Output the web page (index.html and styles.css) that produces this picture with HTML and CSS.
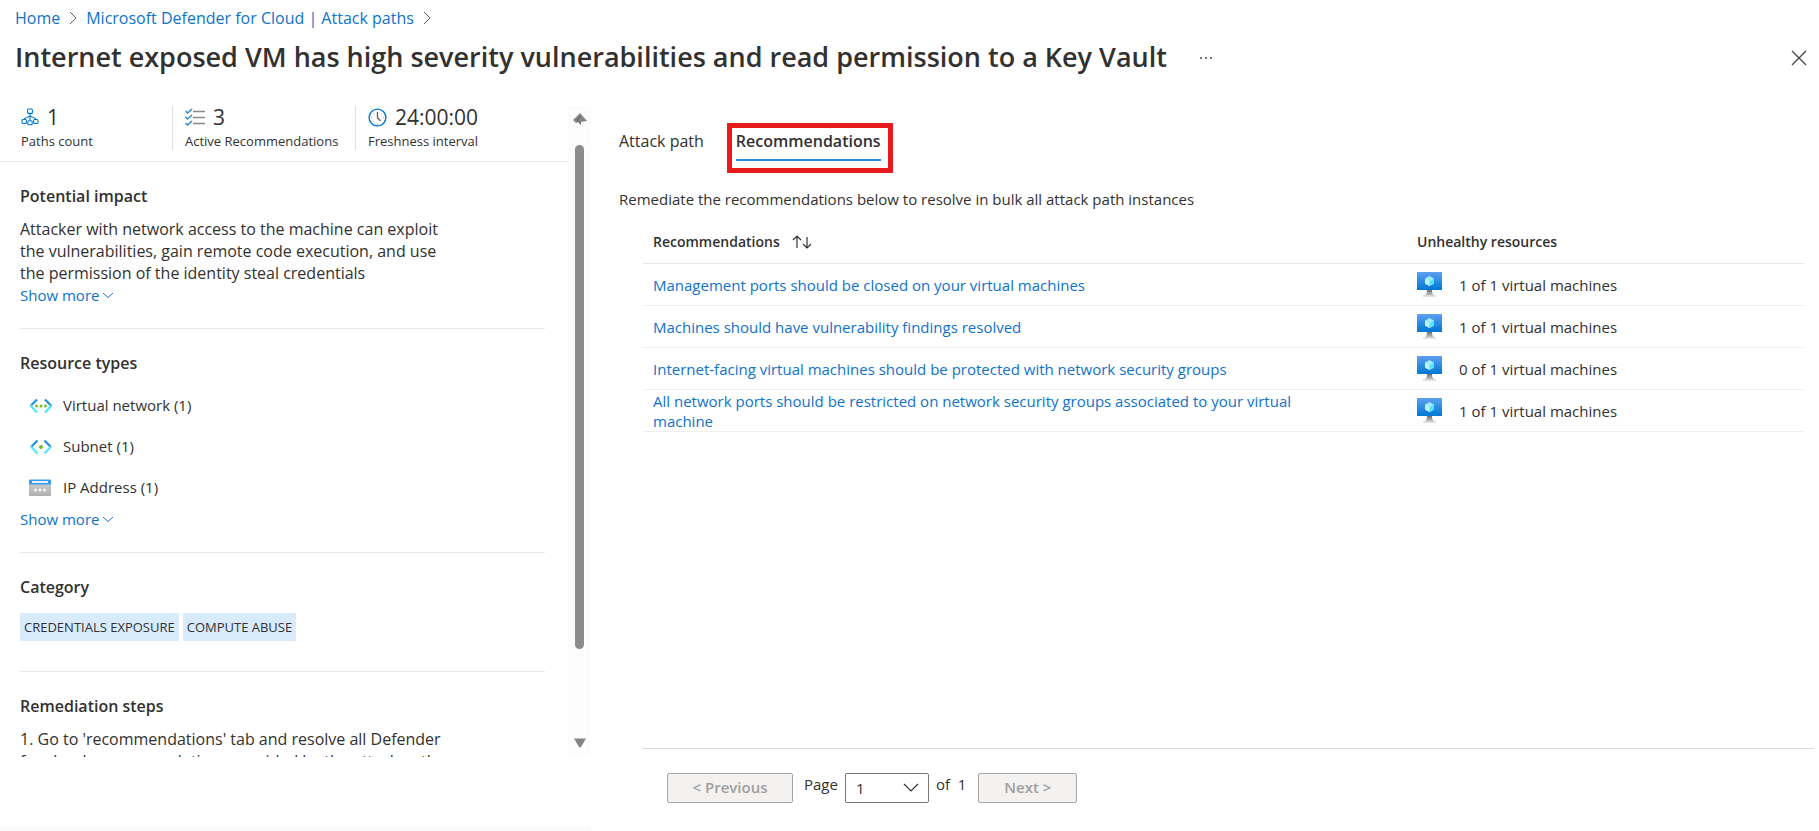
FILE: index.html
```html
<!DOCTYPE html>
<html lang="en">
<head>
<meta charset="utf-8">
<title>Attack path - Microsoft Defender for Cloud</title>
<link rel="stylesheet" href="styles.css">
</head>
<body>
<svg class="defs" width="0" height="0" aria-hidden="true">
  <defs>
    <linearGradient id="screen" x1="0" y1="1" x2="0" y2="0"><stop offset="0" stop-color="#0078d4"/><stop offset="1" stop-color="#5ea0ef"/></linearGradient>
    <linearGradient id="stand" x1="0" y1="0" x2="0" y2="1"><stop offset="0" stop-color="#707070"/><stop offset="1" stop-color="#c8c8c8"/></linearGradient>
    <linearGradient id="grey" x1="0" y1="0" x2="0" y2="1"><stop offset="0" stop-color="#d2d2d2"/><stop offset="1" stop-color="#b0b0b0"/></linearGradient>
    <symbol id="vm" viewBox="0 0 25 25">
      <path d="M10 18h5c0 3 .5 4.500 3 5.500H7c2.500-1 3-2.500 3-5.500z" fill="url(#stand)"/>
      <path d="M6 23.500h13v1H6z" fill="#c8c8c8"/>
      <rect width="25" height="18" rx=".6" fill="url(#screen)"/>
      <path d="M12.500 4l4.500 2.500v5L12.500 14 8 11.500v-5z" fill="#9cebff"/>
      <path d="M12.500 9v5L8 11.500v-5z" fill="#c3f1ff"/>
      <path d="M12.500 9v5l4.500-2.500v-5z" fill="#50e6ff"/>
    </symbol>
    <symbol id="down" viewBox="0 0 12 8"><path d="M1 2l5 4.500L11 2" fill="none" stroke="currentColor"/></symbol>
  </defs>
</svg>
<header class="top">
  <nav class="crumbs" aria-label="Breadcrumb">
    <a href="#">Home</a>
    <svg width="8" height="14" viewBox="0 0 8 14"><path d="M1 1l6 6-6 6" fill="none" stroke="#605e5c"/></svg>
    <a href="#">Microsoft Defender for Cloud | Attack paths</a>
    <svg width="8" height="14" viewBox="0 0 8 14"><path d="M1 1l6 6-6 6" fill="none" stroke="#605e5c"/></svg>
  </nav>
  <div class="title-row">
    <h1>Internet exposed VM has high severity vulnerabilities and read permission to a Key Vault</h1>
    <button class="icon-btn" aria-label="More"><svg width="14" height="4" viewBox="0 0 14 4" fill="#444"><circle cx="2" cy="2" r="1"/><circle cx="7" cy="2" r="1"/><circle cx="12" cy="2" r="1"/></svg></button>
    <button class="icon-btn close" aria-label="Close"><svg width="16" height="16" viewBox="0 0 16 16"><path d="M1 1l14 14M15 1L1 15" stroke="#444" stroke-width="1.300"/></svg></button>
  </div>
</header>
<main class="main">
  <aside class="side">
    <div class="scroller">
      <div class="content">
        <div class="stats">
          <div class="stat paths">
            <div class="value"><svg width="18" height="18" viewBox="0 0 18 18" fill="none" stroke="#0078d4" stroke-width="1.100"><rect x="6.600" y="1" width="4.800" height="4.400" rx="1"/><path d="M9 5.500v7M3.500 11.500v-1L9 8l5.500 2.500v1"/><rect x="1" y="11.500" width="4.400" height="4" rx="1"/><rect x="6.800" y="12.800" width="4.400" height="4" rx="1"/><rect x="12.600" y="11.500" width="4.400" height="4" rx="1"/></svg>1</div>
            <div class="label">Paths count</div>
          </div>
          <div class="stat recs">
            <div class="value"><svg width="20" height="18" viewBox="0 0 20 18" fill="none" stroke-width="1.500"><path d="M8 3.500h12M8 9.500h12M8 15.500h12" stroke="#8a8886"/><path d="M.5 3l2 2L7 1M.5 9l2 2L7 7M.5 15l2 2L7 13" stroke="#2b88d8"/></svg>3</div>
            <div class="label">Active Recommendations</div>
          </div>
          <div class="stat fresh">
            <div class="value"><svg width="19" height="19" viewBox="0 0 19 19" fill="none"><circle cx="9.500" cy="9.500" r="8.400" stroke="#0078d4" stroke-width="1.400"/><path d="M9.500 4v6l3 3" stroke="#605e5c" stroke-width="1.300"/><path d="M9.500 15v1.500M3 9.500h1M15 9.500h1M5 5l.7.700M14 5l-.7.700M5 14l.7-.7" stroke="#8a8886" stroke-width=".7"/></svg>24:00:00</div>
            <div class="label">Freshness interval</div>
          </div>
        </div>
        <section class="block">
          <h2>Potential impact</h2>
          <p>Attacker with network access to the machine can exploit the vulnerabilities, gain remote code execution, and use the permission of the identity steal credentials</p>
          <button class="more">Show more<svg width="12" height="8"><use href="#down"/></svg></button>
        </section>
        <section class="block">
          <h2>Resource types</h2>
          <ul class="types">
            <li><svg width="24" height="16" viewBox="0 0 24 16" fill="none" stroke-width="2.200"><path d="M8 1.500L1.500 8" stroke="#1f8fe0"/><path d="M1.500 7.500L8 14.500" stroke="#50e6ff"/><path d="M16 1.500L22.500 8" stroke="#1f8fe0"/><path d="M22.500 7.500L16 14.500" stroke="#50e6ff"/><g fill="#76bc2d"><circle cx="7.500" cy="8" r="1.500"/><circle cx="12" cy="8" r="1.500"/><circle cx="16.500" cy="8" r="1.500"/></g></svg>Virtual network (1)</li>
            <li><svg width="24" height="16" viewBox="0 0 24 16" fill="none" stroke-width="2.200"><path d="M8.500 1.500L2 8" stroke="#1f8fe0"/><path d="M2 7.500L8.500 14.500" stroke="#50e6ff"/><path d="M15.500 1.500L22 8" stroke="#1f8fe0"/><path d="M22 7.500L15.500 14.500" stroke="#50e6ff"/><circle cx="12" cy="8" r="2" fill="#76bc2d"/></svg>Subnet (1)</li>
            <li><svg width="24" height="18" viewBox="0 0 24 18"><rect x="0" y="1" width="22" height="16" rx="1" fill="url(#grey)"/><path d="M0 5.500V1.500Q0 .5 1 .5h20q1 0 1 1v4z" fill="#3c9be8"/><rect x="3" y="2" width="16" height="2" fill="#e6f4ff"/><g fill="#f5f5f5"><circle cx="6.500" cy="11" r="1.500"/><circle cx="11" cy="11" r="1.500"/><circle cx="15.500" cy="11" r="1.500"/></g></svg>IP Address (1)</li>
          </ul>
          <button class="more">Show more<svg width="12" height="8"><use href="#down"/></svg></button>
        </section>
        <section class="block">
          <h2>Category</h2>
          <div class="tags"><span>CREDENTIALS EXPOSURE</span><span>COMPUTE ABUSE</span></div>
        </section>
        <section class="block">
          <h2>Remediation steps</h2>
          <p>1. Go to 'recommendations' tab and resolve all Defender for cloud recommendations provided by the attack path.</p>
        </section>
      </div>
      <div class="scrollbar" aria-hidden="true">
        <svg width="14" height="12" viewBox="0 0 14 12"><path d="M0 7l7-7 7 8-6 1v3L5 9 3 10z" fill="#858585"/><path d="M8 3L4 7l4 4" fill="none" stroke="#555"/></svg>
        <div class="track"><div class="thumb"></div></div>
        <svg width="14" height="10" viewBox="0 0 14 10"><path d="M1 .5h12L8 9q-1 1-2 0z" fill="#858585"/></svg>
      </div>
    </div>
    <div class="strip"></div>
  </aside>
  <section class="detail">
    <div class="tabs" role="tablist">
      <button class="tab" role="tab" aria-selected="false">Attack path</button>
      <button class="tab active" role="tab" aria-selected="true">Recommendations</button>
    </div>
    <p class="intro">Remediate the recommendations below to resolve in bulk all attack path instances</p>
    <table class="grid">
      <thead>
        <tr><th>Recommendations<svg width="20" height="14" viewBox="0 0 20 14" fill="none" stroke="#323130" stroke-width="1.200"><path d="M5 13V1M1 5l4-4 4 4M15 2v11M11 9l4 4 4-4"/></svg></th><th class="count">Unhealthy resources</th></tr>
      </thead>
      <tbody>
        <tr><td><a href="#">Management ports should be closed on your virtual machines</a></td><td><span class="res"><svg width="25" height="25"><use href="#vm"/></svg>1 of 1 virtual machines</span></td></tr>
        <tr><td><a href="#">Machines should have vulnerability findings resolved</a></td><td><span class="res"><svg width="25" height="25"><use href="#vm"/></svg>1 of 1 virtual machines</span></td></tr>
        <tr><td><a href="#">Internet-facing virtual machines should be protected with network security groups</a></td><td><span class="res"><svg width="25" height="25"><use href="#vm"/></svg>0 of 1 virtual machines</span></td></tr>
        <tr><td><a href="#">All network ports should be restricted on network security groups associated to your virtual machine</a></td><td><span class="res"><svg width="25" height="25"><use href="#vm"/></svg>1 of 1 virtual machines</span></td></tr>
      </tbody>
    </table>
    <div class="pager">
      <button class="prev" disabled>&lt; Previous</button>
      <label for="page">Page</label>
      <span class="select"><select id="page"><option>1</option></select><svg width="16" height="10" viewBox="0 0 16 10"><path d="M1 1l7 7 7-7" fill="none" stroke="#323130" stroke-width="1.200"/></svg></span>
      <span class="of">of&nbsp; 1</span>
      <button class="next" disabled>Next &gt;</button>
    </div>
  </section>
</main>
</body>
</html>
```
FILE: styles.css
```css
* { box-sizing: border-box; }
body {
  margin: 0;
  height: 100vh;
  display: flex;
  flex-direction: column;
  background: #fff;
  color: #323130;
  font: 15px/21px "Open Sans", "Noto Sans", sans-serif;
}
h1, h2, p, ul { margin: 0; padding: 0; }
a { color: #0f72cc; text-decoration: none; }
button, select { font: inherit; color: inherit; }
svg { flex: none; }
.defs { position: absolute; }

.top { padding: 6px 12px 0 15px; height: 98px; flex: none; }
.crumbs { display: flex; align-items: center; gap: 9px; height: 24px; font-size: 16px; }
.title-row { display: flex; align-items: center; height: 56px; }
h1 { font-size: 27px; line-height: 38px; font-weight: 600; white-space: nowrap; padding-bottom: 2px; }
.icon-btn { display: flex; padding: 0; border: 0; background: none; margin-left: 32px; }
.close { margin-left: auto; }

.main { flex: 1; min-height: 0; display: flex; }
.side { flex: none; width: 591px; display: flex; flex-direction: column; }
.scroller { flex: 1; min-height: 0; display: flex; overflow: hidden; margin-bottom: 70px; padding-top: 8px; }
.content { flex: 1; min-width: 0; }
.strip { height: 4px; background: #fafafa; }
.scrollbar {
  width: 23px;
  display: flex;
  flex-direction: column;
  align-items: center;
  background: #fcfcfc;
  padding: 7px 0 9px;
}
.track { flex: 1; padding: 20px 0 0; }
.thumb { width: 9px; height: 85%; border-radius: 5px; background: #8b8b8b; }

.stats { display: flex; height: 56px; border-bottom: 1px solid #eae6e6; padding-left: 21px; }
.stat { height: 44px; white-space: nowrap; }
.stat + .stat { border-left: 1px solid #e1dfdd; padding-left: 12px; }
.paths { width: 151px; }
.recs { width: 183px; }
.value { display: flex; align-items: center; gap: 8px; line-height: 22px; font-size: 21px; font-weight: 500; }
.label { font-size: 13px; line-height: 26px; }

.block { margin: 0 23px 0 20px; padding: 22px 0; border-bottom: 1px solid #eae6e6; }
h2 { font-size: 16px; line-height: 24px; font-weight: 600; margin-bottom: 10px; }
.block p { font-size: 16px; line-height: 22px; width: 430px; }
.more { display: flex; align-items: center; gap: 3px; padding: 0; border: 0; background: none; color: #0f72cc; line-height: 22px; }
.types { list-style: none; }
.types li { display: flex; align-items: center; gap: 10px; height: 41px; padding-left: 9px; }
.tags { display: flex; gap: 4px; padding: 4px 0 8px; }
.tags span { background: #d8ebfd; font-size: 13px; line-height: 28px; padding: 0 4px; }

.detail { flex: 1; min-width: 0; padding: 31px 0 0 28px; display: flex; flex-direction: column; }
.tabs { display: flex; gap: 32px; height: 32px; }
.tab { position: relative; border: 0; background: none; padding: 0 0 5px; font-size: 16px; border-bottom: 2px solid transparent; }
.active { font-weight: 600; border-bottom-color: #2b88d8; }
.active::after { content: ""; position: absolute; inset: -6px -12px -14px -9px; border: 5px solid #e81c1c; }
.intro { margin-top: 28px; }

.grid { margin: 10px 15px 0 24px; border-spacing: 0; text-align: left; table-layout: fixed; }
.grid th { height: 44px; font-size: 14px; font-weight: 600; padding: 0 0 0 10px; border-bottom: 1px solid #e6e6e6; }
.grid th svg { margin-left: 12px; vertical-align: -2px; }
.count { width: 397px; }
.grid td { height: 42px; line-height: 20px; padding: 0 0 0 10px; border-bottom: 1px solid #efefef; }
.grid td:first-child { padding-right: 100px; }
.res { display: flex; align-items: center; gap: 17px; }

.pager {
  margin: auto 5px 0 24px;
  height: 83px;
  padding: 24px 0 0 24px;
  border-top: 1px solid #dcdcdc;
  display: flex;
  align-items: flex-start;
  line-height: 22px;
}
.pager button { height: 30px; padding: 0 0 2px; border: 1px solid #a8a6a4; border-radius: 2px; background: #f3f2f1; color: #a19f9d; font-weight: 600; }
.pager .prev { width: 126px; }
.pager .next { width: 99px; margin-left: 12px; }
.pager label { margin: 0 7px 0 11px; }
.select { display: flex; align-items: center; position: relative; }
.select select { appearance: none; width: 84px; height: 30px; border: 1px solid #7a7876; border-radius: 2px; background: #fff; padding: 0 10px; }
.select svg { position: absolute; right: 10px; pointer-events: none; }
.of { margin-left: 7px; }
```
